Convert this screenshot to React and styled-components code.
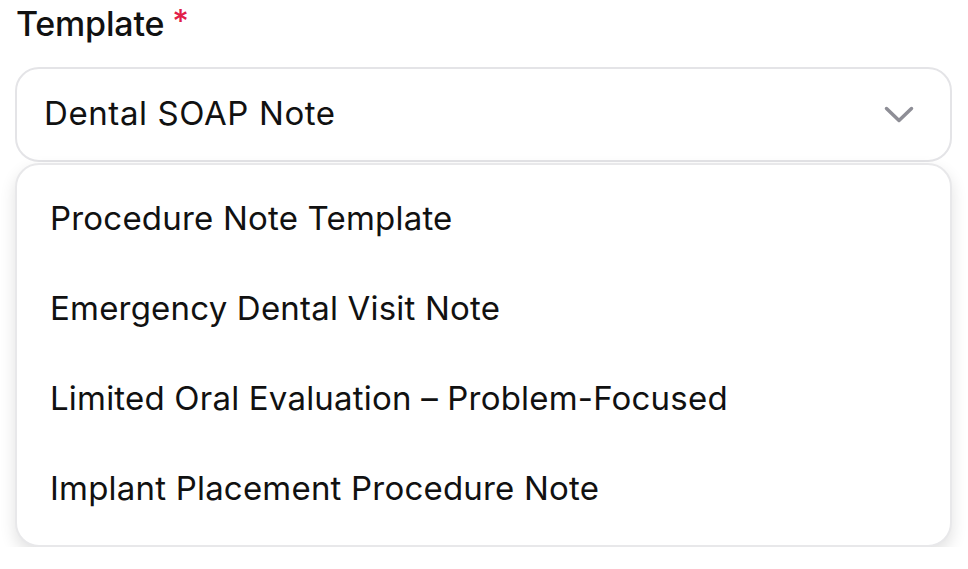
import React from "react";
import styled, { createGlobalStyle } from "styled-components";

const Global = createGlobalStyle`
  html, body { margin: 0; padding: 0; background: #ffffff; }
  body { font-family: Inter, "Noto Sans", sans-serif; color: #111111; }
  * { box-sizing: border-box; }
`;

const Page = styled.div`
  padding: 4px 16px 0 15px;
  width: 968px;
`;

const Label = styled.div`
  display: flex;
  align-items: flex-start;
  gap: 8px;
  font-size: 34px;
  font-weight: 500;
  line-height: 40px;
  letter-spacing: -0.2px;
  color: #111111;
  padding-left: 1px;
`;

const Star = styled.span`
  color: #e11d48;
  font-size: 32px;
  line-height: 36px;
`;

const Field = styled.div`
  margin-top: 23px;
`;

const Trigger = styled.div`
  height: 95px;
  border: 2px solid #e4e4e7;
  border-radius: 24px;
  display: flex;
  align-items: center;
  justify-content: space-between;
  padding: 0 36px 4px 27px;
  font-size: 33px;
  letter-spacing: 0.6px;
  color: #111111;
  background: #fff;
`;

const Chevron = styled.svg`
  margin-top: 4px;
`;

const Menu = styled.div`
  margin-top: 1px;
  border: 2px solid #e8e8ea;
  border-radius: 24px;
  background: #fff;
  box-shadow: 0 7px 16px rgba(0, 0, 0, 0.12);
  padding: 8px 0 12px;
`;

const Item = styled.div`
  height: 90px;
  display: flex;
  align-items: center;
  padding-left: 33px;
  font-size: 33px;
  letter-spacing: 0.2px;
  color: #111111;
`;

const items = [
  "Procedure Note Template",
  "Emergency Dental Visit Note",
  "Limited Oral Evaluation – Problem-Focused",
  "Implant Placement Procedure Note",
];

export default function App() {
  return (
    <>
      <Global />
      <Page>
        <Label>
          Template<Star>*</Star>
        </Label>
        <Field>
          <Trigger>
            <span>Dental SOAP Note</span>
            <Chevron width="30" height="18" viewBox="0 0 30 18" fill="none">
              <path d="M2.5 2.5 L15 14.5 L27.5 2.5" stroke="#8e8e96" strokeWidth="3.5" strokeLinecap="round" strokeLinejoin="round" />
            </Chevron>
          </Trigger>
          <Menu>
            {items.map((t) => (
              <Item key={t}>{t}</Item>
            ))}
          </Menu>
        </Field>
      </Page>
    </>
  );
}
